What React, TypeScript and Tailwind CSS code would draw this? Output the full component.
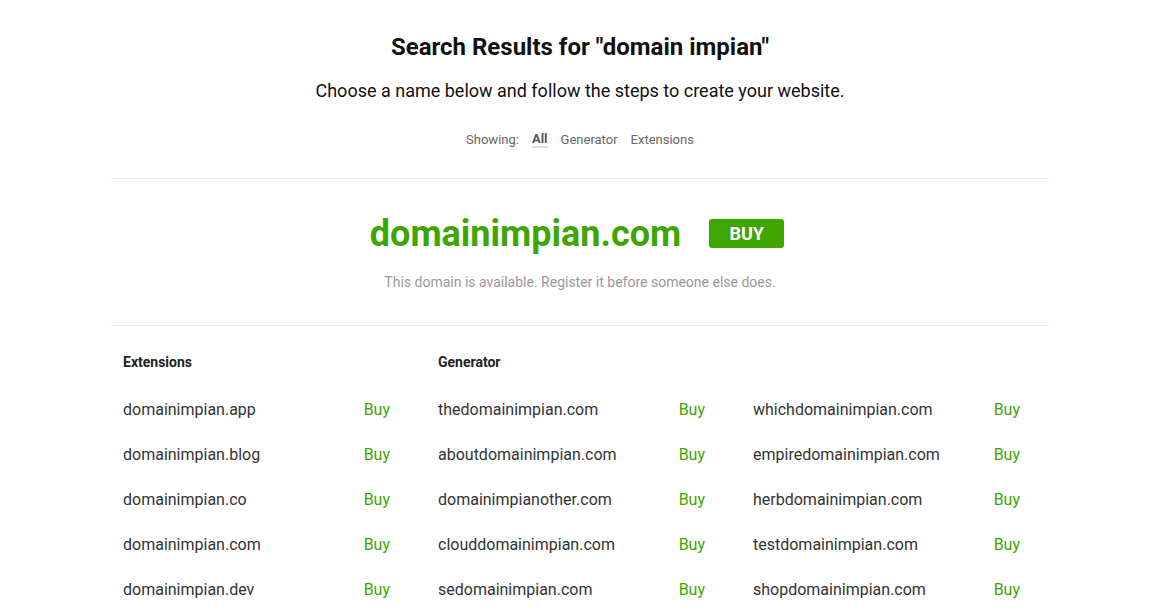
import React from "react";

const extensions = [
  "domainimpian.app",
  "domainimpian.blog",
  "domainimpian.co",
  "domainimpian.com",
  "domainimpian.dev",
];

const generatorA = [
  "thedomainimpian.com",
  "aboutdomainimpian.com",
  "domainimpianother.com",
  "clouddomainimpian.com",
  "sedomainimpian.com",
];

const generatorB = [
  "whichdomainimpian.com",
  "empiredomainimpian.com",
  "herbdomainimpian.com",
  "testdomainimpian.com",
  "shopdomainimpian.com",
];

function DomainList({ title, items }: { title?: string; items: string[] }) {
  return (
    <div className="pl-[13px]">
      <div className="h-[24px] text-[14px] font-bold text-[#222] leading-[24px]">{title ?? "\u00a0"}</div>
      <div className="mt-[14px] w-[267px]">
        {items.map((d) => (
          <div key={d} className="flex h-[45px] items-center justify-between text-[16px]">
            <span className="text-[#333]">{d}</span>
            <a className="text-[#3ea600] cursor-pointer">Buy</a>
          </div>
        ))}
      </div>
    </div>
  );
}

export default function App() {
  return (
    <div className="min-h-screen bg-white font-['Roboto',sans-serif]">
      <div className="mx-auto w-[940px]">
        <div className="pt-[29px] pb-[28px] text-center">
          <h1 className="text-[24px] font-bold leading-[36px] text-[#111]">
            Search Results for "domain impian"
          </h1>
          <p className="mt-[12px] text-[18px] leading-[28px] text-[#111]">
            Choose a name below and follow the steps to create your website.
          </p>
          <div className="mt-[25px] flex items-center justify-center gap-[13px] text-[13px] text-[#666]">
            <span>Showing:</span>
            <span className="font-bold text-[#555] border-b-2 border-[#ddd] leading-[15px]">All</span>
            <span>Generator</span>
            <span>Extensions</span>
          </div>
        </div>
        <div className="border-t border-[#eee]" />
        <div className="pt-[33px] pb-[32px] text-center">
          <div className="flex items-center justify-center gap-[28px] pr-[6px]">
            <span className="text-[36px] font-bold leading-[44px] text-[#3ea600]">domainimpian.com</span>
            <button className="h-[29px] w-[75px] rounded-[3px] bg-[#3ea600] text-[18px] font-bold text-white">
              BUY
            </button>
          </div>
          <p className="mt-[16px] text-[14px] text-[#999]">
            This domain is available. Register it before someone else does.
          </p>
        </div>
        <div className="border-t border-[#eee]" />
        <div className="grid grid-cols-[315px_315px_310px] pt-[24px]">
          <DomainList title="Extensions" items={extensions} />
          <DomainList title="Generator" items={generatorA} />
          <DomainList items={generatorB} />
        </div>
      </div>
    </div>
  );
}
